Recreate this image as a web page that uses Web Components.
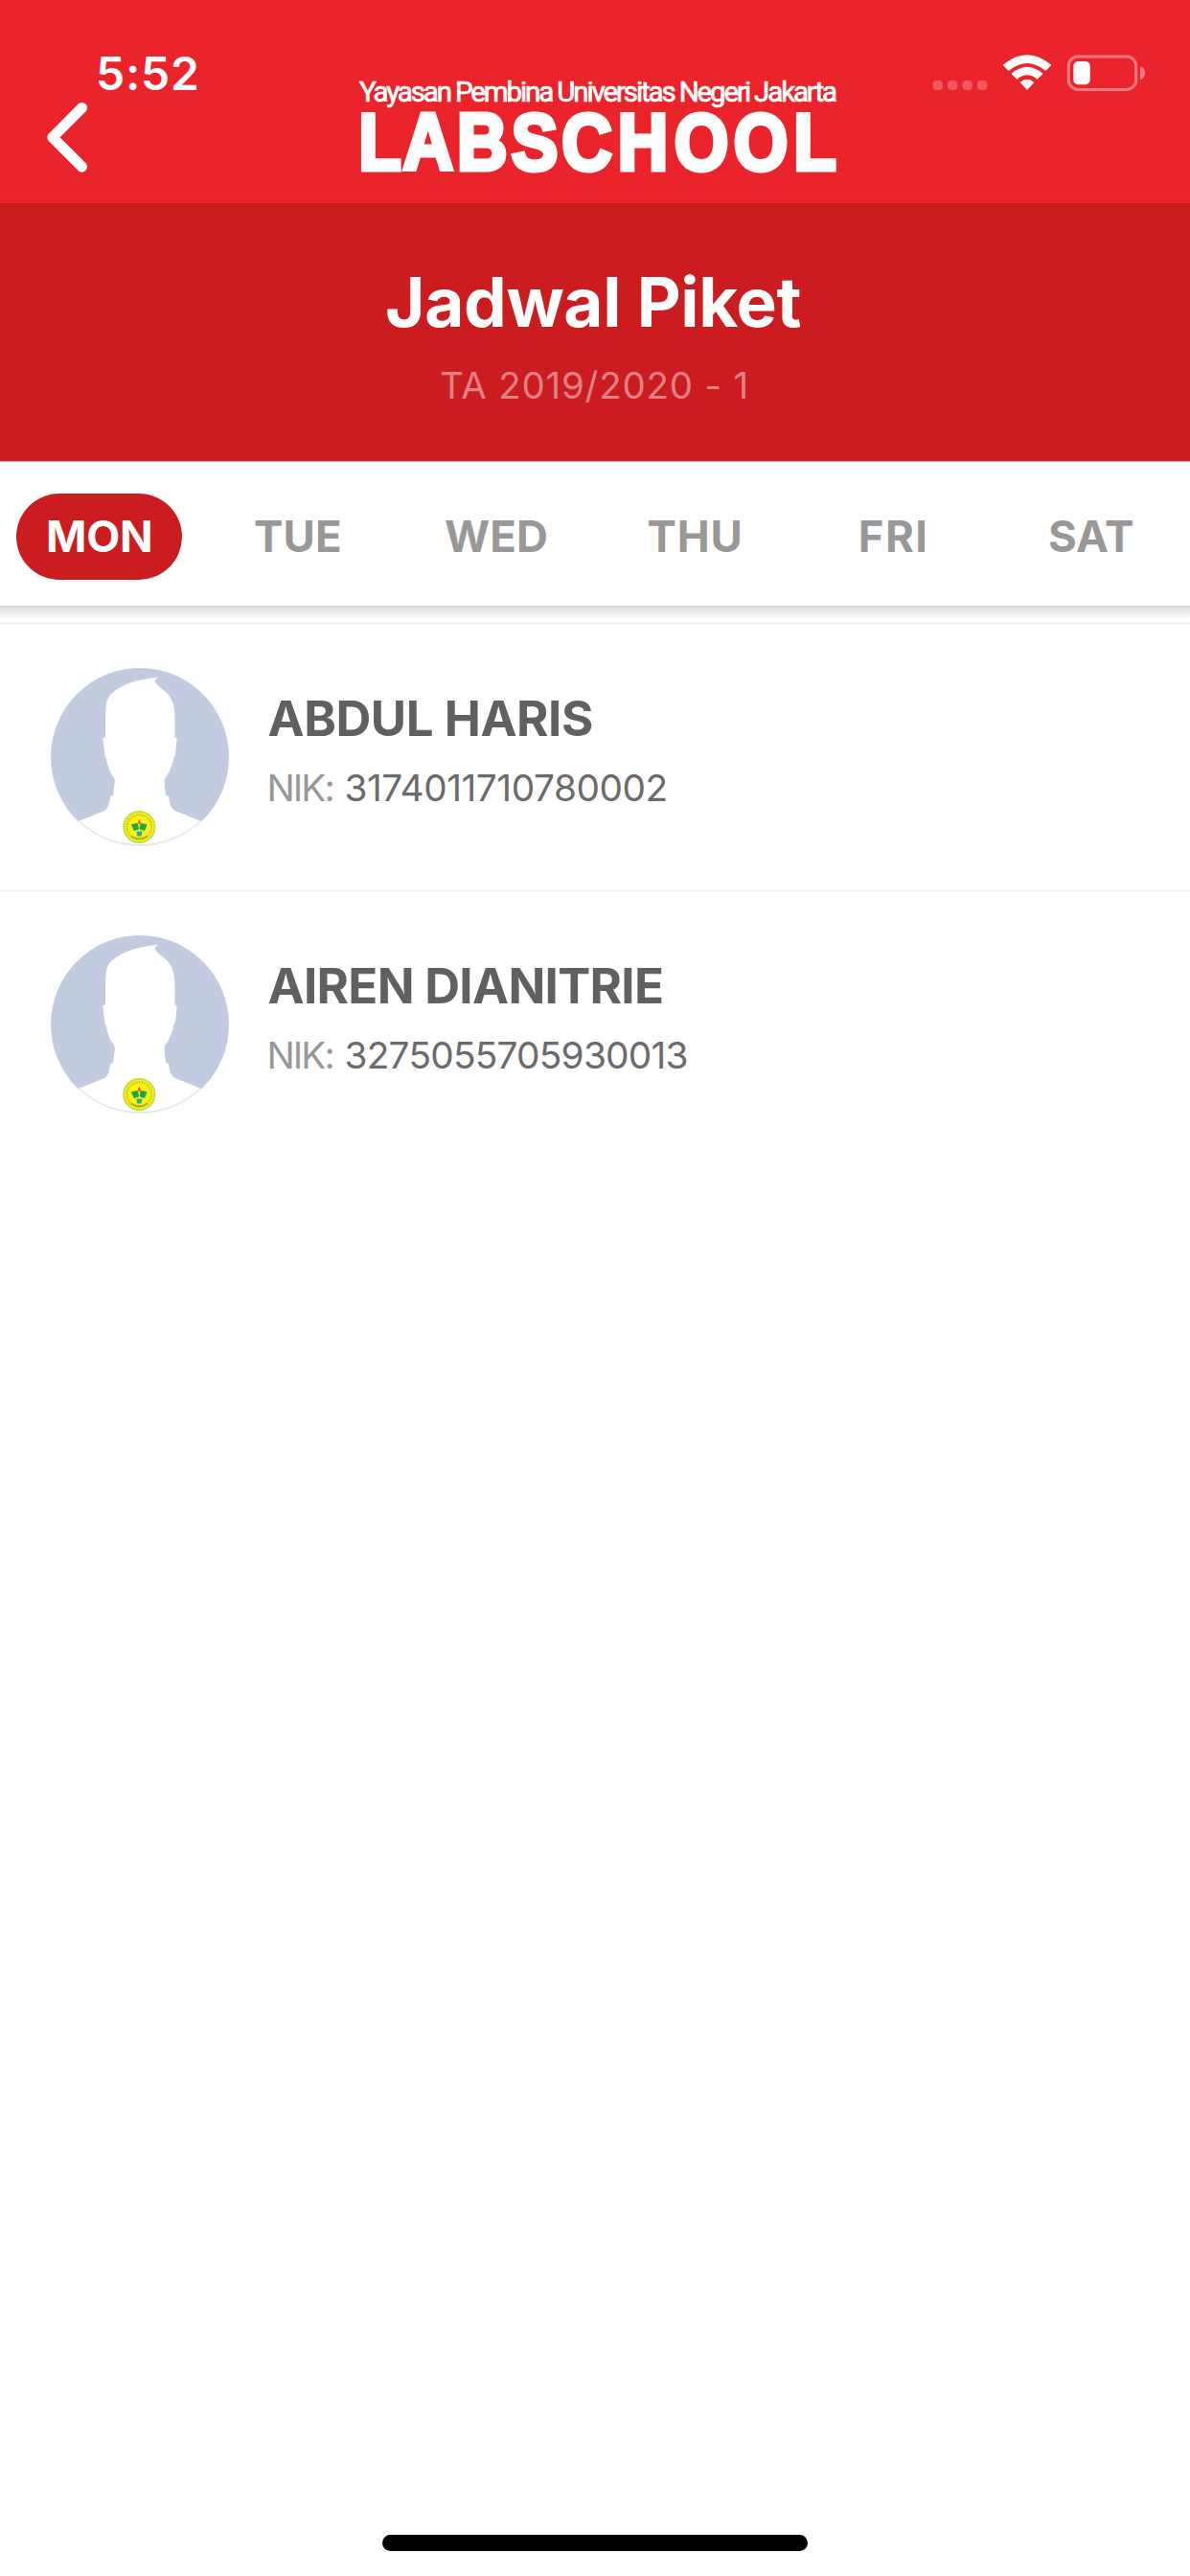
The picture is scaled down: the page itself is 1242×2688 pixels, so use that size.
<!DOCTYPE html>
<html lang="id">
<head>
<meta charset="utf-8">
<title>Jadwal Piket</title>
<style>
  html, body { margin: 0; padding: 0; background: #fff; }
  body { width: 1242px; height: 2688px; overflow: hidden; font-family: Inter, "Liberation Sans", sans-serif; }
</style>
</head>
<body>
<duty-app>
  <app-header slot="header"></app-header>
  <page-title slot="header" heading="Jadwal Piket" term="TA 2019/2020 - 1"></page-title>
  <day-tabs slot="header">
    <day-tab ink="107" active>MON</day-tab>
    <day-tab ink="89">TUE</day-tab>
    <day-tab ink="105">WED</day-tab>
    <day-tab ink="96">THU</day-tab>
    <day-tab ink="67.5">FRI</day-tab>
    <day-tab ink="87">SAT</day-tab>
  </day-tabs>
  <person-row name="ABDUL HARIS" name-ink="337.5" nik="3174011710780002" nik-ink="333"></person-row>
  <person-row name="AIREN DIANITRIE" name-ink="410.5" nik="3275055705930013" nik-ink="355"></person-row>
</duty-app>

<script>
const define = (name, html, setup) => customElements.define(name, class extends HTMLElement {
  connectedCallback() {
    if (this.shadowRoot) return;
    this.attachShadow({ mode: 'open' }).innerHTML = html(this);
    if (setup) setup(this);
  }
});

/* One line of text, tracked so that its inked width equals the "ink" attribute. */
define('fit-text', () => `
  <style>
    :host { display: block; white-space: nowrap; }
    span { display: inline-block; }
  </style><span></span>`, host => {
  const span = host.shadowRoot.querySelector('span');
  const text = host.getAttribute('text');
  const ink = parseFloat(host.getAttribute('ink'));
  span.textContent = text;
  const cs = getComputedStyle(host);
  const ctx = document.createElement('canvas').getContext('2d');
  ctx.font = `${cs.fontWeight} ${cs.fontSize} ${cs.fontFamily}`;
  const m = ctx.measureText(text);
  const natural = m.actualBoundingBoxLeft + m.actualBoundingBoxRight;
  span.style.letterSpacing = ((ink - natural) / (text.length - 1)) + 'px';
  span.style.marginLeft = m.actualBoundingBoxLeft + 'px';
  host.style.width = ink + 'px';
});

define('duty-app', () => `
  <style>
    :host { display: flex; flex-direction: column; width: 1242px; height: 2688px; background: #fff; }
    .top { display: flex; flex-direction: column; }
    .list { flex: 1; padding-top: 18px; background: linear-gradient(#d8d8d8 0 2px, #e6e6e6 2px 4px, #ececec 7px, #fafafa 12px, #fff 16px); }
    .foot { display: flex; justify-content: center; height: 43.5px; }
    .home { width: 444px; height: 17px; border-radius: 9px; background: #000; }
  </style>
  <div class="top"><slot name="header"></slot></div>
  <div class="list"><slot></slot></div>
  <div class="foot"><div class="home"></div></div>`);

define('app-header', () => `
  <style>
    :host { display: grid; grid-template-columns: 355px 1fr 355px; height: 212px; background: #ea242a; color: #fff; }
    .left { display: flex; flex-direction: column; }
    fit-text { margin: 51px 0 0 103px; font-size: 48px; font-weight: 600; line-height: 51px; }
    .back { margin: 3px 0 0 46px; }
    .right { display: flex; align-items: flex-start; justify-content: flex-end; }
    svg { display: block; }
    .logo { width: 532px; height: 212px; }
  </style>
  <div class="left">
    <fit-text text="5:52" ink="103"></fit-text>
    <svg class="back" width="50" height="80" viewBox="46 105 50 80"><path d="M85.5 112.5 54.8 143.3 85.5 174" fill="none" stroke="#fff" stroke-width="11" stroke-linecap="round" stroke-linejoin="round"/></svg>
  </div>
  <svg class="logo" viewBox="355 0 532 212" fill="#fff">
    <text x="375" y="105.7" font-family="Roboto, sans-serif" font-size="29.5" stroke="#fff" stroke-width=".7" textLength="499" lengthAdjust="spacing">Yayasan Pembina Universitas Negeri Jakarta</text>
    <text transform="translate(0 177.300) scale(.87 1)" x="430.2 483.3 548.2 613.6 674 741.1 808.9 880.2 952.1" y="0" font-family="Liberation Sans, Arial, sans-serif" font-weight="700" font-size="83.500" stroke="#fff" stroke-width="5">LABSCHOOL</text>
  </svg>
  <div class="right">
    <svg width="355" height="120" viewBox="887 0 355 120">
      <g fill="#f0585d">
        <rect x="973.5" y="84" width="10.4" height="10" rx="4"/><rect x="989" y="84" width="10.4" height="10" rx="4"/>
        <rect x="1004.5" y="84" width="10.4" height="10" rx="4"/><rect x="1020" y="84" width="10.4" height="10" rx="4"/>
      </g>
      <g fill="#fff" stroke="#fff" stroke-width="1.5" stroke-linejoin="round">
        <path d="M1047.6 68Q1072 48 1096.400 68L1091.300 73Q1072 57.500 1052.700 73Z"/>
        <path d="M1056.500 77Q1072 64 1087.500 77L1082.700 81.800Q1072 73 1061.300 81.800Z"/>
        <path d="M1065.600 86Q1072 81.200 1078.400 86L1072 92.800Z"/>
      </g>
      <rect x="1115.300" y="59" width="70.400" height="34.400" rx="10" fill="none" stroke="#f37c80" stroke-width="3"/>
      <rect x="1120.300" y="64" width="17.400" height="24.300" rx="5" fill="#fff"/>
      <path d="M1190 69.200Q1195.200 71 1195.200 76.200T1190 83.200Z" fill="#f37c80"/>
    </svg>
  </div>`);

define('page-title', el => `
  <style>
    :host { display: flex; flex-direction: column; height: 269px; background: #cb1c20; border-bottom: 1px solid #d9a5a6; }
    .h { margin: 66px 0 0 404px; font-size: 71px; font-weight: 700; line-height: 74px; color: #fff; }
    .t { margin: 26px 0 0 460px; font-size: 38.5px; line-height: 48px; color: #e48084; font-weight: 400; }
  </style>
  <fit-text class="h" text="${el.getAttribute('heading')}" ink="431.5"></fit-text>
  <fit-text class="t" text="${el.getAttribute('term')}" ink="318.5"></fit-text>`);

define('day-tabs', () => `
  <style>
    :host { display: grid; grid-template-columns: repeat(6, 1fr); align-items: center; height: 150px; padding-top: 0; background: #fff; }
    ::slotted(day-tab) { justify-self: center; }
  </style><slot></slot>`);

define('day-tab', el => `
  <style>
    :host { display: flex; align-items: center; justify-content: center; width: 173px; height: 90px; margin-top: 6px; border-radius: 45px;
      font-size: 45.500px; font-weight: 700; line-height: 90px; color: #999897; }
    :host([active]) { background: #cb1c20; color: #fff; }
  </style><fit-text text="${el.textContent.trim()}" ink="${el.getAttribute('ink')}"></fit-text>`);

define('person-avatar', () => `
  <style>:host { display: block; width: 186px; height: 186px; } svg { display: block; }</style>
  <svg width="186" height="186" viewBox="0 0 186 186">
    <defs><clipPath id="c"><circle cx="93" cy="93" r="93"/></clipPath></defs>
    <g clip-path="url(#c)">
      <rect width="186" height="186" fill="#c3cbe0"/>
      <path fill="#fff" d="M112 9.700Q107.500 13 109.300 15.300Q112 19 119 24Q129 32 129.500 50V72.300L131.700 73.500L130 91Q128 93 127.700 97Q124 110 118.700 115.500L118.900 125L120.300 133L123 134C124 142 125 147 131 149.500L157 160L186 172V186H0V172L28.700 160L56 149Q60.500 147 62.300 134L65 133L67 117L65.500 114Q60 107 58 95L56.500 92L54.300 73.500L57 72.300V50Q57 34 62 28Q77 13 112 9.700Z"/>
    </g>
    <path d="M30 160A92.500 92.500 0 0 0 156 160" fill="none" stroke="#dcdcdf" stroke-width="1"/>
    <circle cx="92.300" cy="166" r="16.300" fill="#f4ee12" stroke="#b5df45" stroke-width="1.500"/>
    <circle cx="92.300" cy="166" r="12.800" fill="none" stroke="#a9a326" stroke-width="1.600" stroke-dasharray="1.200 1.300" opacity=".75"/>
    <circle cx="92.300" cy="166" r="10.800" fill="#f8f11a"/>
    <path d="M84.500 163.500 90.500 162.500 91.500 168 87 169.500ZM100.100 163.500 94.100 162.500 93.100 168 97.600 169.500Z" fill="#1fa64a" stroke="#1fa64a" stroke-width="1" stroke-linejoin="round"/>
    <path d="M89.500 170.500H95.500L94.500 175.500H90.200Z" fill="#2fae8c"/>
    <path d="M92.300 158C94.500 160.500 94 162.800 92.500 163.500C90.500 162.500 90.600 160.500 92.300 158Z" fill="#f0562b"/>
    <path d="M84 175.500Q92.300 181 100.600 175.500" fill="none" stroke="#9a8d2c" stroke-width="1.800" stroke-dasharray="1.500 .8"/>
  </svg>`);

define('person-row', el => `
  <style>
    :host { display: flex; align-items: flex-start; box-sizing: border-box; height: 279px; padding: 46px 0 0 52.500px; border-top: 1px solid #eee; }
    .info { display: flex; flex-direction: column; padding-left: 42px; }
    .name { margin-top: 22.500px; font-size: 51px; line-height: 60px; font-weight: 700; color: #606060; }
    .nik { display: flex; margin: 19px 0 0 1px; gap: 14px; font-size: 38.800px; line-height: 46px; color: #6b6b6b; font-weight: 400; }
    .k { color: #979797; font-weight: 400; }
  </style>
  <person-avatar></person-avatar>
  <div class="info">
    <fit-text class="name" text="${el.getAttribute('name')}" ink="${el.getAttribute('name-ink')}"></fit-text>
    <div class="nik">
      <fit-text class="k" text="NIK:" ink="66"></fit-text>
      <fit-text text="${el.getAttribute('nik')}" ink="${el.getAttribute('nik-ink')}"></fit-text>
    </div>
  </div>`);
</script>
</body>
</html>
